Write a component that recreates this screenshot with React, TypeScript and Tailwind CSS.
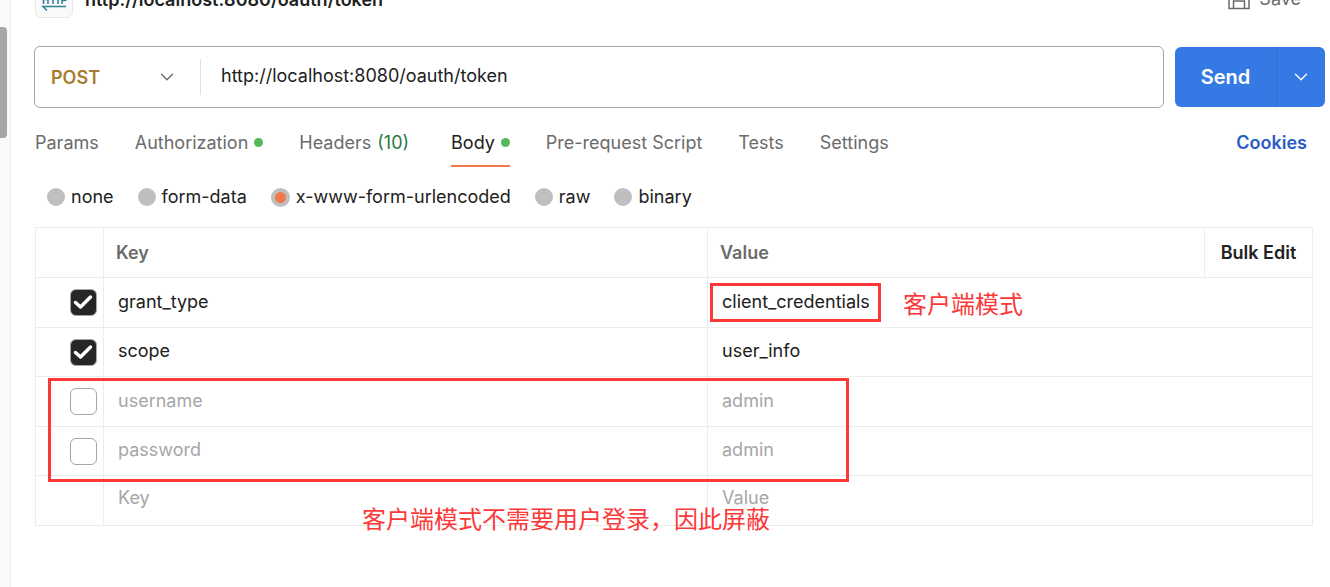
import { useState } from "react";
import { ChevronDown } from "lucide-react";

type Param = { key: string; value: string; enabled: boolean };

const TABS = [
  { name: "Params" },
  { name: "Authorization", dot: true },
  { name: "Headers", count: "(10)" },
  { name: "Body", dot: true },
  { name: "Pre-request Script" },
  { name: "Tests" },
  { name: "Settings" },
];

const BODY_TYPES = ["none", "form-data", "x-www-form-urlencoded", "raw", "binary"];

const INITIAL_PARAMS: Param[] = [
  { key: "grant_type", value: "client_credentials", enabled: true },
  { key: "scope", value: "user_info", enabled: true },
  { key: "username", value: "admin", enabled: false },
  { key: "password", value: "admin", enabled: false },
];

function HttpIcon() {
  return (
    <svg width="26" height="26" viewBox="0 0 26 26" fill="none" stroke="#2f7f95" strokeWidth="1.5" aria-hidden="true">
      <path d="M1 6h24M20 2l5 4" />
      <path d="M2.500 9v9M7 9v9M2.500 13.500h4.500M9.500 9.500h5M12 9.500v8.500M15 9.500h4M17 9.500v8.500M21 18V9.500h2.500a2.200 2.200 0 0 1 0 5h-2.500" />
      <path d="M25 20.500H2l4 4" />
    </svg>
  );
}

function SaveIcon() {
  return (
    <svg width="22" height="22" viewBox="0 0 22 22" fill="none" stroke="#6b6b6b" strokeWidth="1.500" aria-hidden="true">
      <path d="M1 1h15l5 5v14.500H1z" />
      <path d="M5.500 20.500V13h11v7.500M5.500 1v5h8V1" />
    </svg>
  );
}

function Title() {
  return (
    <header className="-mt-5 flex h-[38px] items-center pl-px pr-6">
      <span className="flex size-[38px] items-center justify-center rounded-md border border-[#e8e8e8] bg-[#f9f9f9]">
        <HttpIcon />
      </span>
      <h1 className="ml-3 flex-1 pt-0.5 text-[18px] leading-6 font-semibold">http://localhost:8080/oauth/token</h1>
      <button type="button" className="flex items-center gap-[9px] text-[#6b6b6b]">
        <SaveIcon />
        Save
      </button>
    </header>
  );
}

function RequestBar() {
  return (
    <div className="mt-7 flex items-center gap-[11px]">
      <div className="flex h-[62px] min-w-0 flex-1 items-center rounded-md border border-[#a6a6a6]">
        <div className="relative flex w-[165px] items-center">
          <select
            aria-label="Method"
            defaultValue="POST"
            className="w-full appearance-none bg-transparent pt-0.5 pl-4 font-semibold text-[#a87b2d]"
          >
            <option>GET</option>
            <option>POST</option>
            <option>PUT</option>
            <option>DELETE</option>
          </select>
          <ChevronDown size={22} strokeWidth={1.5} className="pointer-events-none absolute right-[22px] text-[#6b6b6b]" />
        </div>
        <div className="h-9 w-px bg-[#e0e0e0]" />
        <input
          type="text"
          aria-label="Request URL"
          defaultValue="http://localhost:8080/oauth/token"
          className="min-w-0 flex-1 bg-transparent px-5 pb-0.5 outline-none"
        />
      </div>
      <div className="flex h-[60px] overflow-hidden rounded-md bg-[#3579e5] text-white">
        <button type="button" className="w-[101px] text-[20px] font-semibold">
          Send
        </button>
        <button
          type="button"
          aria-label="More send options"
          className="flex w-[49px] items-center justify-center border-l border-[#2f6dd0]"
        >
          <ChevronDown size={22} strokeWidth={1.5} />
        </button>
      </div>
    </div>
  );
}

function Tabs() {
  const [active, setActive] = useState("Body");
  return (
    <nav className="mt-2.5 flex items-center justify-between pr-[18px] pl-px">
      <div role="tablist" className="flex gap-9">
        {TABS.map((tab) => (
          <button
            key={tab.name}
            type="button"
            role="tab"
            aria-selected={tab.name === active}
            onClick={() => setActive(tab.name)}
            className={`flex h-[49px] items-center gap-1.5 border-b-2 pt-0.5 ${
              tab.name === active ? "border-[#f2784b] text-[#212121]" : "border-transparent text-[#6b6b6b]"
            }`}
          >
            {tab.name}
            {tab.dot && <span className="size-[9px] rounded-full bg-[#55b85c]" />}
            {tab.count && <span className="pr-1.5 text-[#2b7a3d]">{tab.count}</span>}
          </button>
        ))}
      </div>
      <a href="#cookies" className="font-semibold text-[#2a5cc9]">
        Cookies
      </a>
    </nav>
  );
}

function BodyTypes() {
  const [type, setType] = useState("x-www-form-urlencoded");
  return (
    <div role="radiogroup" aria-label="Body type" className="mt-[18px] flex gap-6 pl-[13px]">
      {BODY_TYPES.map((name) => (
        <label key={name} className="flex items-center gap-1.5">
          <input
            type="radio"
            name="body-type"
            checked={name === type}
            onChange={() => setType(name)}
            className="size-[18px] appearance-none rounded-full border-4 border-[#bfbfbf] bg-[#bfbfbf] checked:size-[19px] checked:bg-[#f2784b]"
          />
          {name}
        </label>
      ))}
    </div>
  );
}

function Check({ label, checked, onChange }: { label: string; checked: boolean; onChange: () => void }) {
  return (
    <label className="relative ml-auto mr-1.5 block size-[27px]">
      <input
        type="checkbox"
        aria-label={label}
        checked={checked}
        onChange={onChange}
        className="block size-[27px] appearance-none rounded-md border border-[#a6a6a6] bg-white checked:bg-[#262626]"
      />
      {checked && (
        <svg
          viewBox="0 0 27 27"
          fill="none"
          stroke="white"
          strokeWidth="3.500"
          strokeLinecap="round"
          strokeLinejoin="round"
          className="pointer-events-none absolute inset-0"
          aria-hidden="true"
        >
          <path d="M5.500 13.500l5 4.500L20.500 8" />
        </svg>
      )}
    </label>
  );
}

function ParamsTable() {
  const [params, setParams] = useState(INITIAL_PARAMS);
  const toggle = (index: number) =>
    setParams(params.map((p, i) => (i === index ? { ...p, enabled: !p.enabled } : p)));

  return (
    <div className="relative mt-[18px] mr-3 ml-px">
      <table className="w-full table-fixed border-collapse border border-[#ececec] [&_td]:border [&_td]:border-[#ececec] [&_td]:p-0 [&_th]:border [&_th]:border-[#ececec]">
        <colgroup>
          <col className="w-[68px]" />
          <col className="w-[47.3%]" />
          <col />
          <col className="w-[108px]" />
        </colgroup>
        <thead>
          <tr className="h-[50px] text-left text-[#6b6b6b]">
            <td />
            <th className="px-3 font-semibold">Key</th>
            <th className="px-3 font-semibold">Value</th>
            <th className="text-center">
              <button type="button" className="font-semibold text-[#212121]">
                Bulk Edit
              </button>
            </th>
          </tr>
        </thead>
        <tbody>
          {params.map((p, i) => (
            <tr key={p.key} className={`h-[50px] even:h-[49px] ${p.enabled ? "text-[#212121]" : "text-[#a6a6a6]"}`}>
              <td>
                <Check label={`Enable ${p.key}`} checked={p.enabled} onChange={() => toggle(i)} />
              </td>
              <td>
                <input type="text" aria-label="Key" defaultValue={p.key} className="block w-full px-3.5 pb-0.5 outline-none" />
              </td>
              <td colSpan={2} className="relative">
                <input type="text" aria-label="Value" defaultValue={p.value} className="block w-full px-3.5 pb-0.5 outline-none" />
                {i === 0 && (
                  <div className="pointer-events-none absolute inset-y-[5px] left-0.5 flex items-center gap-[22px]">
                    <span className="h-full w-[171px] border-3 border-[#fc3838]" />
                    <Note>客户端模式</Note>
                  </div>
                )}
              </td>
            </tr>
          ))}
          <tr className="h-[50px]">
            <td />
            <td>
              <input type="text" aria-label="New key" placeholder="Key" className="block w-full px-3.5 pb-1.5 outline-none placeholder:text-[#a6a6a6]" />
            </td>
            <td colSpan={2}>
              <input type="text" aria-label="New value" placeholder="Value" className="block w-full px-3.5 pb-1.5 outline-none placeholder:text-[#a6a6a6]" />
            </td>
          </tr>
        </tbody>
      </table>
      <div className="pointer-events-none absolute top-[151px] left-[13px] h-[104px] w-[801px] border-3 border-[#fc3838]" />
      <div className="pointer-events-none absolute top-[273px] left-[327px]">
        <Note>客户端模式不需要用户登录，因此屏蔽</Note>
      </div>
    </div>
  );
}

function Note({ children }: { children: string }) {
  return (
    <p lang="zh-CN" className="font-['Noto_Sans_CJK_SC',sans-serif] text-[24px] leading-9 whitespace-nowrap text-[#fc3838]">
      {children}
    </p>
  );
}

export default function App() {
  return (
    <div className="flex h-screen overflow-hidden bg-white font-['Inter',sans-serif] text-[18px] leading-6 text-[#212121]">
      <aside className="w-[11px] shrink-0 border-r border-[#ececec] bg-[#f9f9f9] pt-[27px]">
        <div className="h-[111px] w-[7px] rounded-r bg-[#a6a6a6]" />
      </aside>
      <main className="min-w-0 flex-1 pr-[5px] pl-[23px]">
        <Title />
        <RequestBar />
        <Tabs />
        <BodyTypes />
        <ParamsTable />
      </main>
    </div>
  );
}
